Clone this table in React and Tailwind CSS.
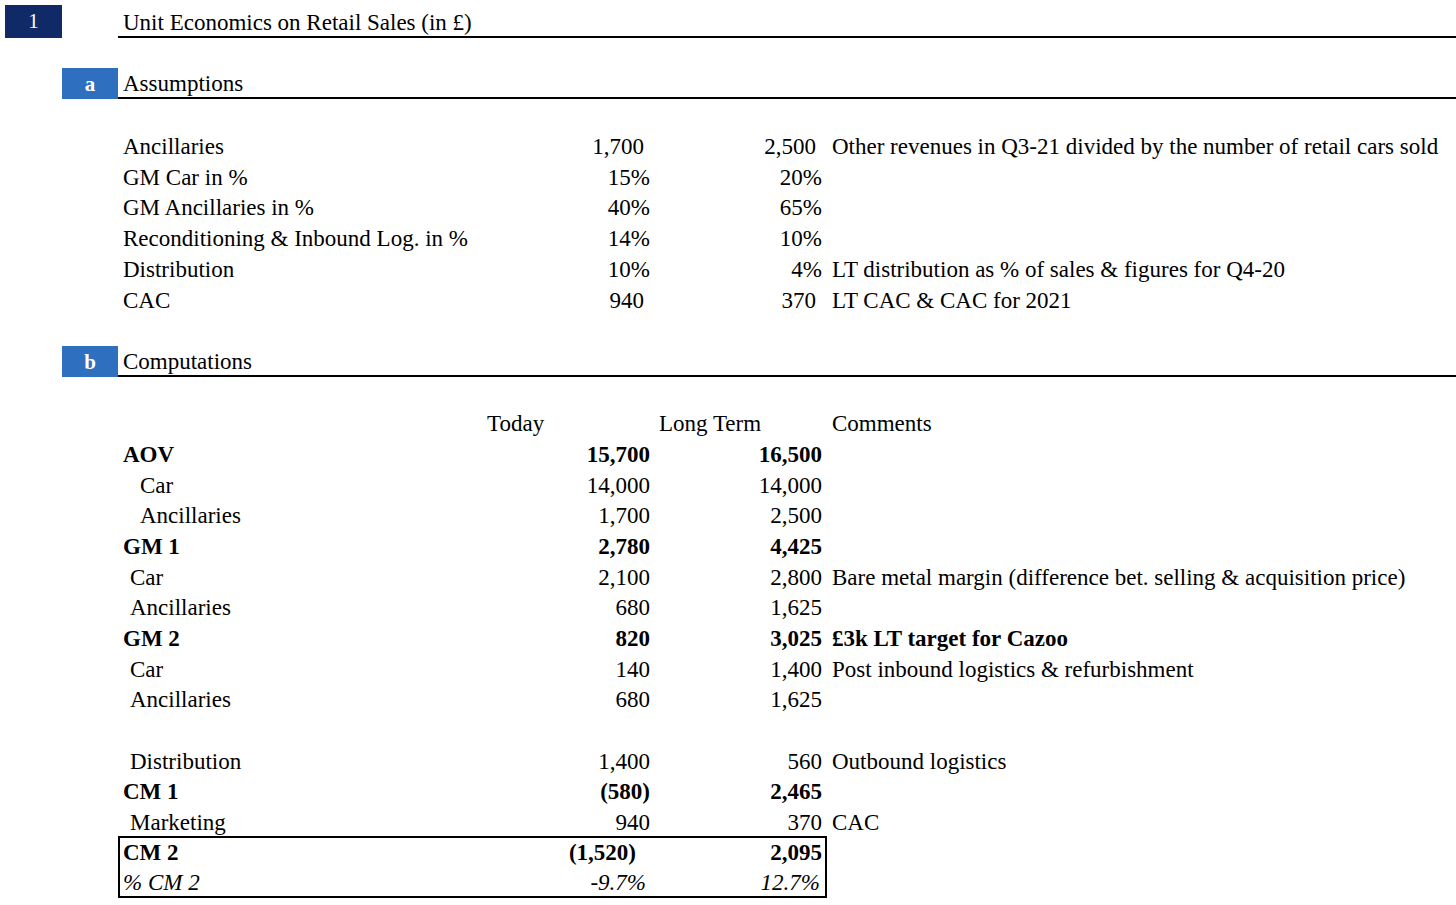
import React from "react";

const assumptions = [
  { label: "Ancillaries", today: "1,700", lt: "2,500", comment: "Other revenues in Q3-21 divided by the number of retail cars sold", pad: true },
  { label: "GM Car in %", today: "15%", lt: "20%" },
  { label: "GM Ancillaries in %", today: "40%", lt: "65%" },
  { label: "Reconditioning & Inbound Log. in %", today: "14%", lt: "10%" },
  { label: "Distribution", today: "10%", lt: "4%", comment: "LT distribution as % of sales & figures for Q4-20" },
  { label: "CAC", today: "940", lt: "370", comment: "LT CAC & CAC for 2021", pad: true },
];

const computations = [
  { label: "AOV", today: "15,700", lt: "16,500", bold: true },
  { label: "Car", today: "14,000", lt: "14,000", indent: "pl-[22px]" },
  { label: "Ancillaries", today: "1,700", lt: "2,500", indent: "pl-[22px]" },
  { label: "GM 1", today: "2,780", lt: "4,425", bold: true },
  { label: "Car", today: "2,100", lt: "2,800", indent: "pl-[12px]", comment: "Bare metal margin (difference bet. selling & acquisition price)" },
  { label: "Ancillaries", today: "680", lt: "1,625", indent: "pl-[12px]" },
  { label: "GM 2", today: "820", lt: "3,025", bold: true, comment: "£3k LT target for Cazoo", boldComment: true },
  { label: "Car", today: "140", lt: "1,400", indent: "pl-[12px]", comment: "Post inbound logistics & refurbishment" },
  { label: "Ancillaries", today: "680", lt: "1,625", indent: "pl-[12px]" },
  { blank: true },
  { label: "Distribution", today: "1,400", lt: "560", indent: "pl-[12px]", comment: "Outbound logistics" },
  { label: "CM 1", today: "(580)", lt: "2,465", bold: true },
  { label: "Marketing", today: "940", lt: "370", indent: "pl-[12px]", comment: "CAC" },
];

function Row({ r }) {
  if (r.blank) return <div className="h-[30.7px]" />;
  return (
    <div className="flex h-[30.7px] items-center">
      <div className="w-[118px] shrink-0" />
      <div className={`w-[352px] shrink-0 pl-[5px] whitespace-nowrap ${r.indent || ""} ${r.bold ? "font-bold" : ""}`}>{r.label}</div>
      <div className={`w-[180px] shrink-0 text-right ${r.pad ? "pr-[6px]" : ""} ${r.bold ? "font-bold" : ""}`}>{r.today}</div>
      <div className={`w-[172px] shrink-0 text-right ${r.pad ? "pr-[6px]" : ""} ${r.bold ? "font-bold" : ""}`}>{r.lt}</div>
      <div className={`pl-[10px] whitespace-nowrap ${r.boldComment ? "font-bold" : ""}`}>{r.comment}</div>
    </div>
  );
}

function SubHeader({ letter, title }) {
  return (
    <div className="flex h-[31px]">
      <div className="w-[62px] shrink-0" />
      <div className="w-[56px] shrink-0 bg-[#2f6fc0] text-white text-[21px] font-bold flex items-center justify-center pt-[3px]">{letter}</div>
      <div className="flex-1 border-b-2 border-black pl-[5px] flex items-end leading-none pb-[2px]">{title}</div>
    </div>
  );
}

export default function App() {
  return (
    <div className="w-[1456px] h-[905px] bg-white text-black text-[23px] overflow-hidden" style={{ fontFamily: '"Liberation Serif", serif' }}>
      <div className="flex h-[38px] pt-[5px]">
        <div className="w-[5px] shrink-0" />
        <div className="w-[57px] shrink-0 bg-[#0f2a66] text-white text-[21px] flex items-center justify-center">1</div>
        <div className="w-[56px] shrink-0" />
        <div className="flex-1 border-b-2 border-black pl-[5px] flex items-end leading-none pb-[2px]">Unit Economics on Retail Sales (in £)</div>
      </div>

      <div className="h-[30px]" />
      <SubHeader letter="a" title="Assumptions" />

      <div className="h-[33px]" />
      {assumptions.map((r, i) => <Row key={i} r={r} />)}

      <div className="h-[30px]" />
      <SubHeader letter="b" title="Computations" />

      <div className="h-[32px]" />
      <div className="flex h-[30.7px] items-center">
        <div className="w-[118px] shrink-0" />
        <div className="w-[352px] shrink-0" />
        <div className="w-[180px] shrink-0 pl-[17px]">Today</div>
        <div className="w-[172px] shrink-0 pl-[9px]">Long Term</div>
        <div className="pl-[10px]">Comments</div>
      </div>
      {computations.map((r, i) => <Row key={i} r={r} />)}

      <div className="flex">
        <div className="w-[118px] shrink-0" />
        <div className="border-2 border-black w-[709px] -mt-[3px]">
          <div className="flex h-[30px] items-center font-bold">
            <div className="w-[350px] shrink-0 pl-[3px]">CM 2</div>
            <div className="w-[180px] shrink-0 text-right pr-[14px]">(1,520)</div>
            <div className="w-[172px] shrink-0 text-right">2,095</div>
          </div>
          <div className="flex h-[28px] items-center italic pt-[2px]">
            <div className="w-[350px] shrink-0 pl-[3px]">% CM 2</div>
            <div className="w-[180px] shrink-0 text-right pr-[4px]">-9.7%</div>
            <div className="w-[172px] shrink-0 text-right pr-[2px]">12.7%</div>
          </div>
        </div>
      </div>
    </div>
  );
}
